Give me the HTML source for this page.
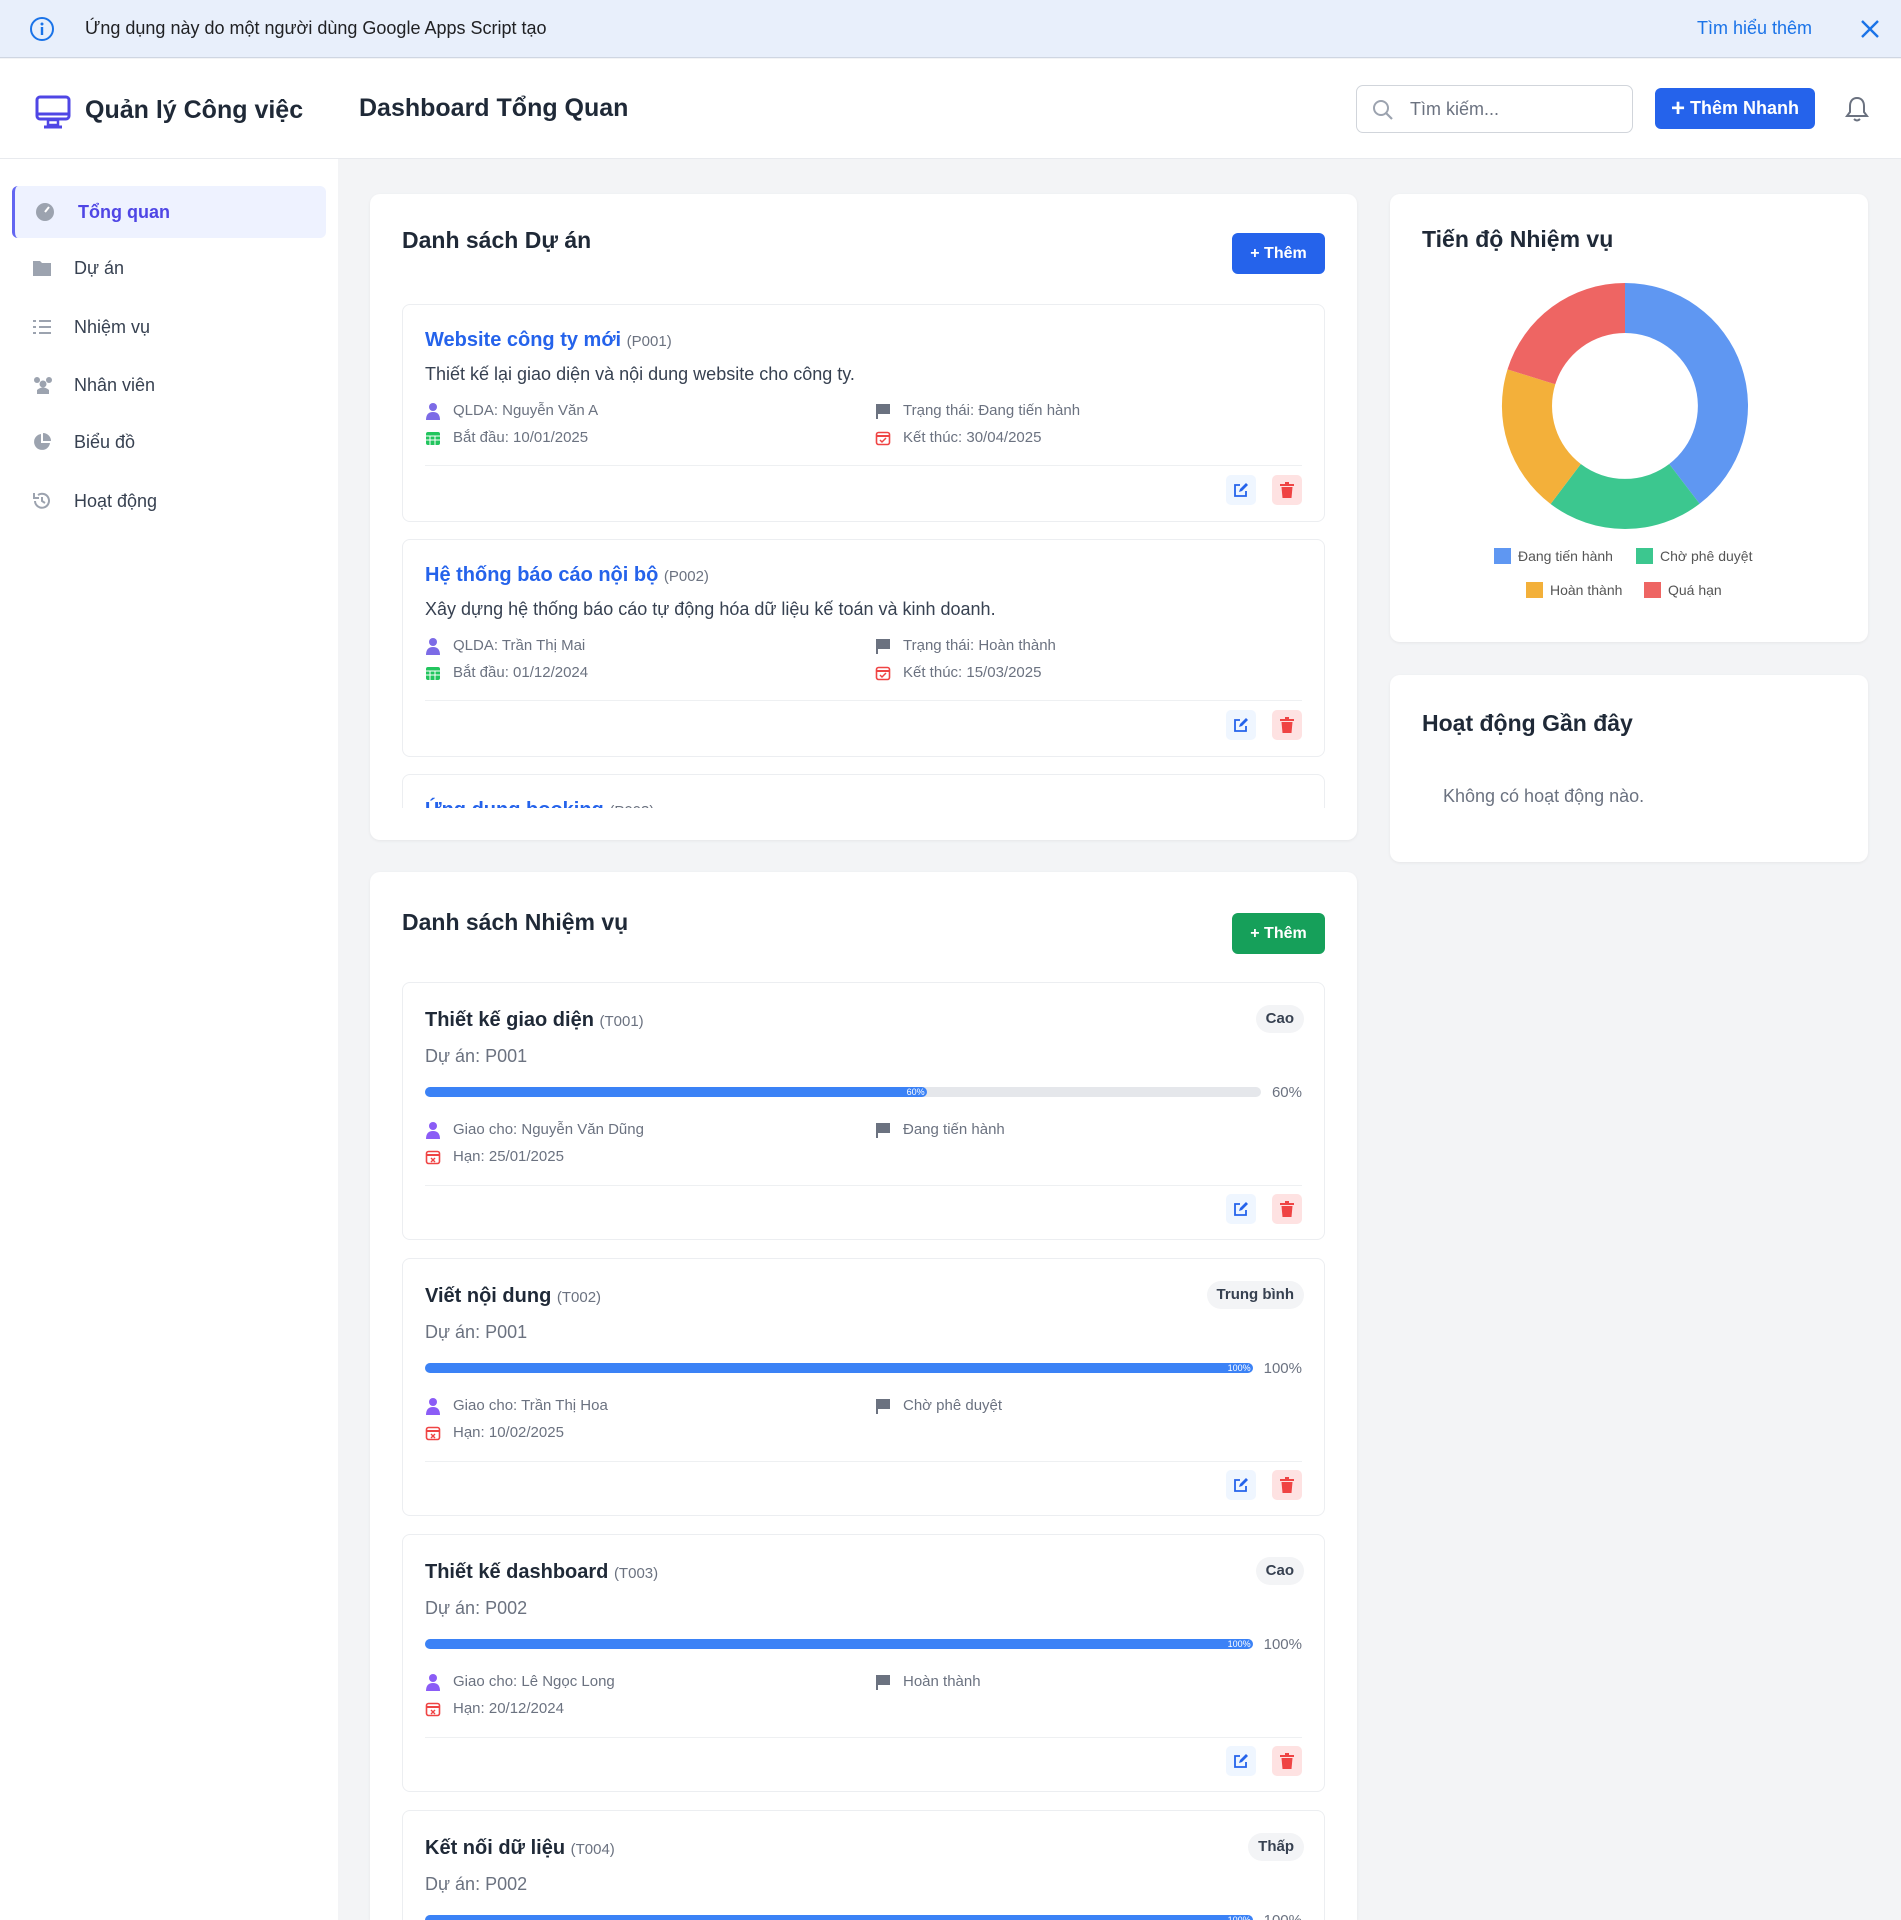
<!DOCTYPE html>
<html><head><meta charset="utf-8">
<style>
*{box-sizing:border-box;margin:0;padding:0}
html,body{width:1901px;height:1920px;overflow:hidden}
body{background:#f3f4f6;font-family:"Liberation Sans","Noto Sans CJK SC",sans-serif;color:#1f2937}
#root{position:relative;width:1901px;height:1920px;overflow:hidden;background:#f3f4f6}
.abs{position:absolute}
.banner{left:0;top:0;width:1901px;height:58px;background:#e8effb;border-bottom:1px solid #cfd6e2}
.header{left:0;top:59px;width:1901px;height:100px;background:#fff;border-bottom:1px solid #e8eaee}
.side{left:0;top:159px;width:338px;height:1761px;background:#fff}
.nav{position:absolute;left:12px;width:314px;height:52px;display:flex;align-items:center;font-size:18px;color:#374151}
.nav.active{background:#eef2ff;border-left:3px solid #6366f1;border-radius:6px;color:#4f46e5;font-weight:bold}
.nav svg{position:absolute;left:20px}
.nav span{position:absolute;left:62px}
.nav.active span{left:63px}
.card{background:#fff;border-radius:10px;box-shadow:0 1px 3px rgba(0,0,0,.06)}
.ctitle{position:absolute;left:32px;top:33px;font-size:23px;font-weight:bold;color:#1f2937}
.btn{position:absolute;color:#fff;font-size:16px;font-weight:bold;border-radius:6px;display:flex;align-items:center;justify-content:center}
.item{position:absolute;left:32px;width:923px;border:1px solid #eceef1;border-radius:8px;background:#fff;padding:22px 22px 0 22px;overflow:hidden}
.ptitle{font-size:20px;line-height:26px;font-weight:bold;color:#2563eb}
.code{font-size:15px;font-weight:normal;color:#6b7280}
.desc{margin-top:7px;font-size:18px;line-height:24px;color:#374151}
.meta{display:flex;font-size:15px;line-height:22px;color:#6b7280;position:relative}
.meta .c1{width:450px;display:flex;align-items:center}
.meta .c2{display:flex;align-items:center}
.meta svg{margin-right:12px;flex:none}
.div{border-top:1px solid #eef0f2}
.acts{display:flex;justify-content:flex-end;gap:16px}
.ab{width:30px;height:30px;border-radius:5px;display:flex;align-items:center;justify-content:center}
.ab.e{background:#eff6ff}.ab.d{background:#fee2e2}
.ttitle{font-size:20px;line-height:26px;font-weight:bold;color:#1f2937}
.badge{position:absolute;right:20px;top:22px;background:#f3f4f6;border-radius:14px;padding:0 10px;height:28px;line-height:28px;font-size:15px;font-weight:bold;color:#374151}
.proj{margin-top:9px;font-size:18px;line-height:24px;color:#6b7280}
.prog{margin-top:19px;display:flex;align-items:center;height:10px}
.track{flex:1;height:10px;background:#e5e7eb;border-radius:5px;position:relative}
.fill{height:10px;background:#3b82f6;border-radius:5px;position:relative;font-size:9px;color:#fff;text-align:right;line-height:10px;padding-right:2px}
.pct{margin-left:11px;font-size:15px;color:#6b7280}
</style></head><body><div id="root">

<div class="abs banner">
  <svg class="abs" style="left:29px;top:16px" width="26" height="26" viewBox="0 0 26 26"><circle cx="13" cy="13" r="11" fill="none" stroke="#1a73e8" stroke-width="2"/><circle cx="13" cy="8" r="1.5" fill="#1a73e8"/><rect x="11.8" y="11" width="2.4" height="8" fill="#1a73e8"/></svg>
  <div class="abs" style="left:85px;top:18px;font-size:18px;color:#202124">Ứng dụng này do một người dùng Google Apps Script tạo</div>
  <div class="abs" style="left:1697px;top:18px;font-size:18px;color:#1a73e8">Tìm hiểu thêm</div>
  <svg class="abs" style="left:1860px;top:19px" width="20" height="20" viewBox="0 0 20 20"><path d="M2 2L18 18M18 2L2 18" stroke="#1a73e8" stroke-width="2.4"/></svg>
</div>

<div class="abs header">
  <svg class="abs" style="left:35px;top:36px" width="36" height="34" viewBox="0 0 36 34"><rect x="2" y="2" width="32" height="22" rx="3" fill="none" stroke="#4f46e5" stroke-width="3"/><path d="M3 19H33" stroke="#4f46e5" stroke-width="3"/><rect x="13" y="25" width="10" height="5" fill="none" stroke="#4f46e5" stroke-width="2.5"/><path d="M9 32H27" stroke="#4f46e5" stroke-width="3"/></svg>
  <div class="abs" style="left:85px;top:37px;font-size:25px;font-weight:bold;color:#1f2937">Quản lý Công việc</div>
  <div class="abs" style="left:359px;top:35px;font-size:25px;font-weight:bold;color:#1f2937">Dashboard Tổng Quan</div>
  <div class="abs" style="left:1356px;top:26px;width:277px;height:48px;border:1px solid #d1d5db;border-radius:7px;background:#fff"></div>
  <svg class="abs" style="left:1372px;top:40px" width="22" height="22" viewBox="0 0 22 22"><circle cx="9" cy="9" r="7" fill="none" stroke="#9ca3af" stroke-width="2"/><path d="M14 14L20 20" stroke="#9ca3af" stroke-width="2.2"/></svg>
  <div class="abs" style="left:1410px;top:40px;font-size:18px;color:#6b7280">Tìm kiếm...</div>
  <div class="btn" style="left:1655px;top:29px;width:160px;height:41px;background:#2563eb;font-size:18px"><span style="font-size:24px;margin-right:5px;font-weight:bold">+</span>Thêm Nhanh</div>
  <svg class="abs" style="left:1844px;top:36px" width="26" height="28" viewBox="0 0 26 28"><path d="M13 3C8 3 6 7 6 11V17L3 21H23L20 17V11C20 7 18 3 13 3Z" fill="none" stroke="#6b7280" stroke-width="2"/><path d="M10 24Q13 27 16 24" fill="none" stroke="#6b7280" stroke-width="2"/></svg>
</div>

<div class="abs side">
  <div class="nav active" style="top:27px"><svg width="20" height="20" viewBox="0 0 20 20"><circle cx="10" cy="10" r="9" fill="#9ca3af"/><path d="M10 10L14 5" stroke="#fff" stroke-width="2"/></svg><span>Tổng quan</span></div>
  <div class="nav" style="top:83px"><svg width="20" height="18" viewBox="0 0 20 18"><path d="M1 2H8L10 4H19V17H1Z" fill="#9ca3af"/></svg><span>Dự án</span></div>
  <div class="nav" style="top:142px"><svg width="20" height="18" viewBox="0 0 20 18"><path d="M7 3H19M7 9H19M7 15H19M1 3H4M1 9H4M1 15H4" stroke="#9ca3af" stroke-width="2"/></svg><span>Nhiệm vụ</span></div>
  <div class="nav" style="top:200px"><svg width="22" height="18" viewBox="0 0 22 18"><circle cx="5" cy="4" r="3" fill="#9ca3af"/><circle cx="17" cy="4" r="3" fill="#9ca3af"/><circle cx="11" cy="8" r="3.5" fill="#9ca3af"/><path d="M5 18V14Q11 9 17 14V18Z" fill="#9ca3af"/></svg><span>Nhân viên</span></div>
  <div class="nav" style="top:257px"><svg width="20" height="20" viewBox="0 0 20 20"><path d="M9 2A8 8 0 1 0 18 11H9Z" fill="#9ca3af"/><path d="M11 1A8 8 0 0 1 19 9H11Z" fill="#9ca3af"/></svg><span>Biểu đồ</span></div>
  <div class="nav" style="top:316px"><svg width="20" height="20" viewBox="0 0 20 20"><path d="M3 10A7 7 0 1 0 6 4" fill="none" stroke="#9ca3af" stroke-width="2"/><path d="M2 2V7H7" fill="none" stroke="#9ca3af" stroke-width="2"/><path d="M10 6V10L13 12" fill="none" stroke="#9ca3af" stroke-width="2"/></svg><span>Hoạt động</span></div>
</div>

<!-- Projects card -->
<div class="abs card" style="left:370px;top:194px;width:987px;height:646px">
  <div class="ctitle">Danh sách Dự án</div>
  <div class="btn" style="left:862px;top:39px;width:93px;height:41px;background:#2563eb">+ Thêm</div>
  <div class="abs" style="left:0;top:110px;width:987px;height:504px;overflow:hidden">
    <div class="item" style="top:0;height:218px">
      <div class="ptitle">Website công ty mới <span class="code">(P001)</span></div>
      <div class="desc">Thiết kế lại giao diện và nội dung website cho công ty.</div>
      <div class="meta" style="margin-top:14px"><div class="c1"><svg width="16" height="18" viewBox="0 0 16 18"><circle cx="8" cy="5" r="4" fill="#7c6be6"/><path d="M1 18Q1 10 8 10Q15 10 15 18Z" fill="#7c6be6"/></svg>QLDA: Nguyễn Văn A</div><div class="c2"><svg width="16" height="16" viewBox="0 0 16 16"><path d="M2 1V16M2 2H14V10H2" fill="#6b7280" stroke="#6b7280" stroke-width="2"/></svg>Trạng thái: Đang tiến hành</div></div>
      <div class="meta" style="margin-top:5px"><div class="c1"><svg width="16" height="16" viewBox="0 0 16 16"><rect x="1" y="2" width="14" height="13" rx="2" fill="#22c55e"/><path d="M1 6H15M5 6V15M10 6V15M1 10H15" stroke="#fff"/></svg>Bắt đầu: 10/01/2025</div><div class="c2"><svg width="16" height="16" viewBox="0 0 16 16"><rect x="1.5" y="2.5" width="13" height="12" rx="2" fill="none" stroke="#ef4444" stroke-width="1.6"/><path d="M1 6H15" stroke="#ef4444" stroke-width="2"/><path d="M5 10L7 12L11 8" stroke="#ef4444" fill="none" stroke-width="1.5"/></svg>Kết thúc: 30/04/2025</div></div>
      <div class="div" style="margin-top:16px"></div>
      <div class="acts" style="margin-top:9px"><div class="ab e"><svg width="16" height="16" viewBox="0 0 16 16"><path d="M13 9V14H2V3H7" fill="none" stroke="#2563eb" stroke-width="1.8"/><path d="M6 10L7 7L13 1L15 3L9 9Z" fill="#2563eb"/></svg></div><div class="ab d"><svg width="14" height="16" viewBox="0 0 14 16"><rect x="0" y="2" width="14" height="2" fill="#ef4444"/><rect x="5" y="0" width="4" height="2" fill="#ef4444"/><path d="M1.5 5H12.5L11.5 16H2.5Z" fill="#ef4444"/></svg></div></div>
    </div>
    <div class="item" style="top:235px;height:218px">
      <div class="ptitle">Hệ thống báo cáo nội bộ <span class="code">(P002)</span></div>
      <div class="desc">Xây dựng hệ thống báo cáo tự động hóa dữ liệu kế toán và kinh doanh.</div>
      <div class="meta" style="margin-top:14px"><div class="c1"><svg width="16" height="18" viewBox="0 0 16 18"><circle cx="8" cy="5" r="4" fill="#7c6be6"/><path d="M1 18Q1 10 8 10Q15 10 15 18Z" fill="#7c6be6"/></svg>QLDA: Trần Thị Mai</div><div class="c2"><svg width="16" height="16" viewBox="0 0 16 16"><path d="M2 1V16M2 2H14V10H2" fill="#6b7280" stroke="#6b7280" stroke-width="2"/></svg>Trạng thái: Hoàn thành</div></div>
      <div class="meta" style="margin-top:5px"><div class="c1"><svg width="16" height="16" viewBox="0 0 16 16"><rect x="1" y="2" width="14" height="13" rx="2" fill="#22c55e"/><path d="M1 6H15M5 6V15M10 6V15M1 10H15" stroke="#fff"/></svg>Bắt đầu: 01/12/2024</div><div class="c2"><svg width="16" height="16" viewBox="0 0 16 16"><rect x="1.5" y="2.5" width="13" height="12" rx="2" fill="none" stroke="#ef4444" stroke-width="1.6"/><path d="M1 6H15" stroke="#ef4444" stroke-width="2"/><path d="M5 10L7 12L11 8" stroke="#ef4444" fill="none" stroke-width="1.5"/></svg>Kết thúc: 15/03/2025</div></div>
      <div class="div" style="margin-top:16px"></div>
      <div class="acts" style="margin-top:9px"><div class="ab e"><svg width="16" height="16" viewBox="0 0 16 16"><path d="M13 9V14H2V3H7" fill="none" stroke="#2563eb" stroke-width="1.8"/><path d="M6 10L7 7L13 1L15 3L9 9Z" fill="#2563eb"/></svg></div><div class="ab d"><svg width="14" height="16" viewBox="0 0 14 16"><rect x="0" y="2" width="14" height="2" fill="#ef4444"/><rect x="5" y="0" width="4" height="2" fill="#ef4444"/><path d="M1.5 5H12.5L11.5 16H2.5Z" fill="#ef4444"/></svg></div></div>
    </div>
    <div class="item" style="top:470px;height:218px">
      <div class="ptitle">Ứng dụng booking <span class="code">(P003)</span></div>
    </div>
  </div>
</div>

<!-- Tasks card -->
<div class="abs card" style="left:370px;top:872px;width:987px;height:1048px;border-radius:10px 10px 0 0">
  <div class="ctitle" style="top:37px">Danh sách Nhiệm vụ</div>
  <div class="btn" style="left:862px;top:41px;width:93px;height:41px;background:#16a05a">+ Thêm</div>
</div>

<!-- Chart card -->
<div class="abs card" style="left:1390px;top:194px;width:478px;height:448px">
  <div class="ctitle" style="top:32px">Tiến độ Nhiệm vụ</div>
  <svg class="abs" style="left:0;top:0" width="478" height="448" viewBox="0 0 478 448">
    <g transform="translate(235,212)">
      <path d="M0 -123 A123 123 0 0 1 74.6 97.8 L44.2 58 A73 73 0 0 0 0 -73Z" fill="#5f97f2"/>
      <path d="M74.6 97.8 A123 123 0 0 1 -74.4 98 L-44.2 58 A73 73 0 0 0 44.2 58Z" fill="#3cc78f"/>
      <path d="M-74.4 98 A123 123 0 0 1 -117.5 -36.6 L-69.7 -21.7 A73 73 0 0 0 -44.2 58Z" fill="#f3b03a"/>
      <path d="M-117.5 -36.6 A123 123 0 0 1 0 -123 L0 -73 A73 73 0 0 0 -69.7 -21.7Z" fill="#ee6563"/>
    </g>
    <g font-family="Liberation Sans, sans-serif" font-size="14" fill="#555">
      <rect x="104" y="354" width="17" height="16" fill="#5f97f2"/><text x="128" y="367">Đang tiến hành</text>
      <rect x="246" y="354" width="17" height="16" fill="#3cc78f"/><text x="270" y="367">Chờ phê duyệt</text>
      <rect x="136" y="388" width="17" height="16" fill="#f3b03a"/><text x="160" y="401">Hoàn thành</text>
      <rect x="254" y="388" width="17" height="16" fill="#ee6563"/><text x="278" y="401">Quá hạn</text>
    </g>
  </svg>
</div>

<!-- Activity card -->
<div class="abs card" style="left:1390px;top:675px;width:478px;height:187px">
  <div class="ctitle" style="top:35px">Hoạt động Gần đây</div>
  <div class="abs" style="left:53px;top:111px;font-size:18px;color:#6b7280">Không có hoạt động nào.</div>
</div>

<!-- task items -->
<div class="item" style="left:402px;top:982px;height:258px;padding-top:24px">
  <div class="ttitle">Thiết kế giao diện <span class="code">(T001)</span></div><div class="badge">Cao</div>
  <div class="proj">Dự án: P001</div>
  <div class="prog"><div class="track"><div class="fill" style="width:60%">60%</div></div><div class="pct">60%</div></div>
  <div class="meta" style="margin-top:22px"><div class="c1"><svg width="16" height="18" viewBox="0 0 16 18"><circle cx="8" cy="5" r="4" fill="#8b5cf6"/><path d="M1 18Q1 10 8 10Q15 10 15 18Z" fill="#8b5cf6"/></svg>Giao cho: Nguyễn Văn Dũng</div><div class="c2"><svg width="16" height="16" viewBox="0 0 16 16"><path d="M2 1V16M2 2H14V10H2" fill="#6b7280" stroke="#6b7280" stroke-width="2"/></svg>Đang tiến hành</div></div>
  <div class="meta" style="margin-top:5px"><div class="c1"><svg width="16" height="16" viewBox="0 0 16 16"><rect x="1.5" y="2.5" width="13" height="12" rx="2" fill="none" stroke="#ef4444" stroke-width="1.6"/><path d="M1 6H15" stroke="#ef4444" stroke-width="2"/><path d="M6 9L10 13M10 9L6 13" stroke="#ef4444" stroke-width="1.4"/></svg>Hạn: 25/01/2025</div></div>
  <div class="div" style="margin-top:17px"></div>
  <div class="acts" style="margin-top:8px"><div class="ab e"><svg width="16" height="16" viewBox="0 0 16 16"><path d="M13 9V14H2V3H7" fill="none" stroke="#2563eb" stroke-width="1.8"/><path d="M6 10L7 7L13 1L15 3L9 9Z" fill="#2563eb"/></svg></div><div class="ab d"><svg width="14" height="16" viewBox="0 0 14 16"><rect x="0" y="2" width="14" height="2" fill="#ef4444"/><rect x="5" y="0" width="4" height="2" fill="#ef4444"/><path d="M1.5 5H12.5L11.5 16H2.5Z" fill="#ef4444"/></svg></div></div>
</div>
<div class="item" style="left:402px;top:1258px;height:258px;padding-top:24px">
  <div class="ttitle">Viết nội dung <span class="code">(T002)</span></div><div class="badge">Trung bình</div>
  <div class="proj">Dự án: P001</div>
  <div class="prog"><div class="track"><div class="fill" style="width:100%">100%</div></div><div class="pct">100%</div></div>
  <div class="meta" style="margin-top:22px"><div class="c1"><svg width="16" height="18" viewBox="0 0 16 18"><circle cx="8" cy="5" r="4" fill="#8b5cf6"/><path d="M1 18Q1 10 8 10Q15 10 15 18Z" fill="#8b5cf6"/></svg>Giao cho: Trần Thị Hoa</div><div class="c2"><svg width="16" height="16" viewBox="0 0 16 16"><path d="M2 1V16M2 2H14V10H2" fill="#6b7280" stroke="#6b7280" stroke-width="2"/></svg>Chờ phê duyệt</div></div>
  <div class="meta" style="margin-top:5px"><div class="c1"><svg width="16" height="16" viewBox="0 0 16 16"><rect x="1.5" y="2.5" width="13" height="12" rx="2" fill="none" stroke="#ef4444" stroke-width="1.6"/><path d="M1 6H15" stroke="#ef4444" stroke-width="2"/><path d="M6 9L10 13M10 9L6 13" stroke="#ef4444" stroke-width="1.4"/></svg>Hạn: 10/02/2025</div></div>
  <div class="div" style="margin-top:17px"></div>
  <div class="acts" style="margin-top:8px"><div class="ab e"><svg width="16" height="16" viewBox="0 0 16 16"><path d="M13 9V14H2V3H7" fill="none" stroke="#2563eb" stroke-width="1.8"/><path d="M6 10L7 7L13 1L15 3L9 9Z" fill="#2563eb"/></svg></div><div class="ab d"><svg width="14" height="16" viewBox="0 0 14 16"><rect x="0" y="2" width="14" height="2" fill="#ef4444"/><rect x="5" y="0" width="4" height="2" fill="#ef4444"/><path d="M1.5 5H12.5L11.5 16H2.5Z" fill="#ef4444"/></svg></div></div>
</div>
<div class="item" style="left:402px;top:1534px;height:258px;padding-top:24px">
  <div class="ttitle">Thiết kế dashboard <span class="code">(T003)</span></div><div class="badge">Cao</div>
  <div class="proj">Dự án: P002</div>
  <div class="prog"><div class="track"><div class="fill" style="width:100%">100%</div></div><div class="pct">100%</div></div>
  <div class="meta" style="margin-top:22px"><div class="c1"><svg width="16" height="18" viewBox="0 0 16 18"><circle cx="8" cy="5" r="4" fill="#8b5cf6"/><path d="M1 18Q1 10 8 10Q15 10 15 18Z" fill="#8b5cf6"/></svg>Giao cho: Lê Ngọc Long</div><div class="c2"><svg width="16" height="16" viewBox="0 0 16 16"><path d="M2 1V16M2 2H14V10H2" fill="#6b7280" stroke="#6b7280" stroke-width="2"/></svg>Hoàn thành</div></div>
  <div class="meta" style="margin-top:5px"><div class="c1"><svg width="16" height="16" viewBox="0 0 16 16"><rect x="1.5" y="2.5" width="13" height="12" rx="2" fill="none" stroke="#ef4444" stroke-width="1.6"/><path d="M1 6H15" stroke="#ef4444" stroke-width="2"/><path d="M6 9L10 13M10 9L6 13" stroke="#ef4444" stroke-width="1.4"/></svg>Hạn: 20/12/2024</div></div>
  <div class="div" style="margin-top:17px"></div>
  <div class="acts" style="margin-top:8px"><div class="ab e"><svg width="16" height="16" viewBox="0 0 16 16"><path d="M13 9V14H2V3H7" fill="none" stroke="#2563eb" stroke-width="1.8"/><path d="M6 10L7 7L13 1L15 3L9 9Z" fill="#2563eb"/></svg></div><div class="ab d"><svg width="14" height="16" viewBox="0 0 14 16"><rect x="0" y="2" width="14" height="2" fill="#ef4444"/><rect x="5" y="0" width="4" height="2" fill="#ef4444"/><path d="M1.5 5H12.5L11.5 16H2.5Z" fill="#ef4444"/></svg></div></div>
</div>
<div class="item" style="left:402px;top:1810px;height:110px;padding-top:24px;border-bottom:none;border-radius:8px 8px 0 0">
  <div class="ttitle">Kết nối dữ liệu <span class="code">(T004)</span></div><div class="badge">Thấp</div>
  <div class="proj">Dự án: P002</div>
  <div class="prog"><div class="track"><div class="fill" style="width:100%">100%</div></div><div class="pct">100%</div></div>
</div>

</div></body></html>
